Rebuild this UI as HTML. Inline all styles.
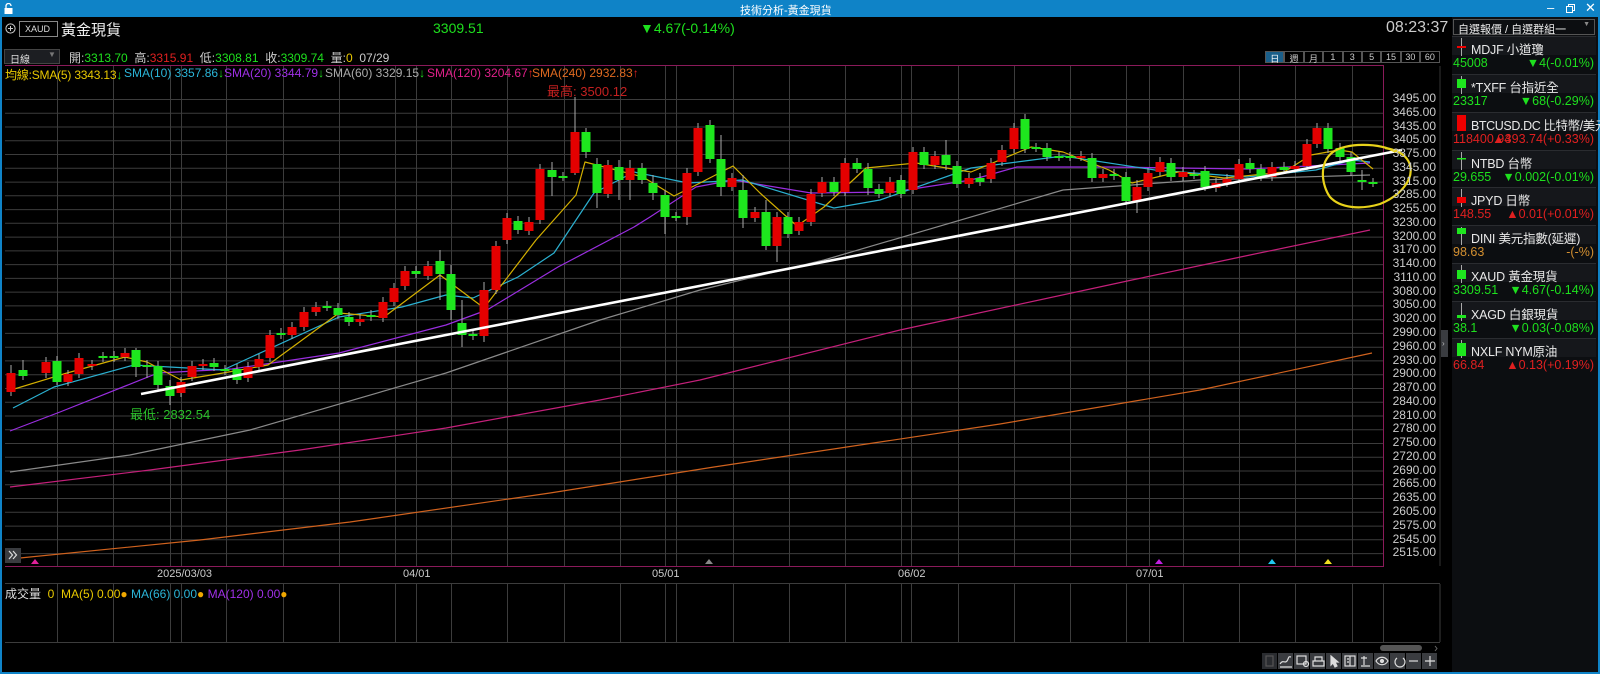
<!DOCTYPE html>
<html><head><meta charset="utf-8">
<style>
*{margin:0;padding:0;box-sizing:border-box}
body{width:1600px;height:674px;background:#000;overflow:hidden;position:relative;font-family:"Liberation Sans","Noto Sans CJK TC",sans-serif;color:#ddd}
.a{position:absolute;white-space:nowrap}
.g{color:#1ee01e}.r{color:#e02020}
.rp{position:absolute;left:1452px;top:17px;width:146px;height:655px;background:#0c0e11}
.it{position:absolute;left:0;width:144px;height:38px}
.it .n{position:absolute;left:0;top:0;width:144px;height:19px;background:#15171b;border-top:1px solid #2a2c30}
.it .n span{position:absolute;left:19px;top:2px;font-size:12.5px;color:#e8e8e8;white-space:nowrap;letter-spacing:-0.2px}
.it .v{position:absolute;left:1px;top:20px;font-size:12.5px;white-space:nowrap}
.it .c{position:absolute;right:2px;top:20px;font-size:12.5px;white-space:nowrap}
.tb{position:absolute;top:653px;width:15px;height:16px;background:#3a3c40}
</style></head><body>
<!-- title bar -->
<div class="a" style="left:0;top:0;width:1600px;height:17px;background:#0f83c7"></div>
<svg class="a" style="left:4px;top:3px" width="9" height="11"><rect x="0.5" y="5" width="8" height="6" fill="#fff"/><path d="M2 5V3a2.5 2.5 0 0 1 5 0" stroke="#fff" stroke-width="1.3" fill="none"/></svg>
<div class="a" style="left:740px;top:2px;font-size:11px;color:#fff">技術分析-黃金現貨</div>
<div class="a" style="left:1547px;top:0;font-size:13px;color:#fff">–</div>
<svg class="a" style="left:1566px;top:4px" width="10" height="9"><rect x="0.5" y="2.5" width="6" height="6" fill="none" stroke="#fff"/><path d="M2.5 2.5V0.5h6v6h-2" fill="none" stroke="#fff"/></svg>
<div class="a" style="left:1585px;top:0;font-size:13px;color:#fff">✕</div>
<!-- borders -->
<div class="a" style="left:0;top:17px;width:2px;height:657px;background:#0f83c7"></div>
<div class="a" style="left:1598px;top:17px;width:2px;height:657px;background:#0f83c7"></div>
<div class="a" style="left:0;top:672px;width:1600px;height:2px;background:#0f83c7"></div>
<!-- row1 -->
<svg class="a" style="left:5px;top:23px" width="11" height="11"><circle cx="5.5" cy="5.5" r="4.6" stroke="#ccc" fill="none"/><path d="M3 5.5h5M5.5 3v5" stroke="#ccc"/></svg>
<div class="a" style="left:19px;top:21px;width:39px;height:16px;border:1px solid #888;font-size:9px;color:#ddd;padding:2px 0 0 5px">XAUD</div>
<div class="a" style="left:61px;top:19px;font-size:15px;color:#f0f0f0">黃金現貨</div>
<div class="a g" style="left:433px;top:20px;font-size:14px">3309.51</div>
<div class="a g" style="left:640px;top:20px;font-size:14px">▼4.67(-0.14%)</div>
<div class="a" style="left:1386px;top:19px;font-size:16px;color:#ccc">08:23:37</div>
<!-- row2 -->
<div class="a" style="left:4px;top:49px;width:56px;height:15px;background:#1c1e22;border:1px solid #444;font-size:10px;color:#ddd;padding:1px 0 0 5px">日線<span style="position:absolute;left:43px;top:0;color:#777;font-size:8px">▼</span></div>
<div class="a" style="left:69px;top:49px;font-size:12px;color:#ccc">開:<span class="g">3313.70</span>&nbsp; 高:<span class="r">3315.91</span>&nbsp; 低:<span class="g">3308.81</span>&nbsp; 收:<span class="g">3309.74</span>&nbsp; 量:<span style="color:#e8c800">0</span>&nbsp; 07/29</div>
<div class="a" style="left:1265px;top:51px;height:12px;display:flex;font-size:9px;color:#ccc">
<div style="width:19.4px;border:1px solid #555;background:#1a5f8a;text-align:center;color:#fff">日</div><div style="width:19.4px;border:1px solid #555;text-align:center">週</div><div style="width:19.4px;border:1px solid #555;text-align:center">月</div><div style="width:19.4px;border:1px solid #555;text-align:center">1</div><div style="width:19.4px;border:1px solid #555;text-align:center">3</div><div style="width:19.4px;border:1px solid #555;text-align:center">5</div><div style="width:19.4px;border:1px solid #555;text-align:center">15</div><div style="width:19.4px;border:1px solid #555;text-align:center">30</div><div style="width:19.4px;border:1px solid #555;text-align:center">60</div></div>

<svg class="a" style="left:0;top:0" width="1452" height="674">
<g stroke="#3c3c3c" stroke-width="1">
<path d="M5 99.5H1383M5 113.3H1383M5 127H1383M5 140.8H1383M5 154.5H1383M5 168.3H1383M5 182.1H1383M5 195.8H1383M5 209.6H1383M5 223.3H1383M5 237.1H1383M5 250.9H1383M5 264.6H1383M5 278.4H1383M5 292.1H1383M5 305.9H1383M5 319.7H1383M5 333.4H1383M5 347.2H1383M5 360.9H1383M5 374.7H1383M5 388.5H1383M5 402.2H1383M5 416H1383M5 429.7H1383M5 443.5H1383M5 457.3H1383M5 471H1383M5 484.8H1383M5 498.5H1383M5 512.3H1383M5 526.1H1383M5 539.8H1383M5 553.6H1383"/>
<path d="M57.5 66V566M113.5 66V566M170.5 66V566M181.5 66V566M226.5 66V566M283.5 66V566M339.5 66V566M395.5 66V566M416.5 66V566M451.5 66V566M507.5 66V566M564.5 66V566M620.5 66V566M665.5 66V566M676.5 66V566M733.5 66V566M789.5 66V566M845.5 66V566M901.5 66V566M911.5 66V566M958.5 66V566M1014.5 66V566M1070.5 66V566M1126.5 66V566M1149.5 66V566M1183.5 66V566M1239.5 66V566M1295.5 66V566M1352.5 66V566"/>
<path d="M57.5 584V642M113.5 584V642M170.5 584V642M181.5 584V642M226.5 584V642M283.5 584V642M339.5 584V642M395.5 584V642M416.5 584V642M451.5 584V642M507.5 584V642M564.5 584V642M620.5 584V642M665.5 584V642M676.5 584V642M733.5 584V642M789.5 584V642M845.5 584V642M901.5 584V642M911.5 584V642M958.5 584V642M1014.5 584V642M1070.5 584V642M1126.5 584V642M1149.5 584V642M1183.5 584V642M1239.5 584V642M1295.5 584V642M1352.5 584V642M1383.5 584V642M5 583.5H1440M5 642.5H1440M1440 584V642"/>
</g>
<path d="M5 65.5H1383.5V566.5H5" stroke="#8a1a5a" fill="none"/>
<path d="M1440 66V566" stroke="#333"/>
<!-- MAs -->
<g fill="none" stroke-width="1.2" stroke-linejoin="round">
<polyline stroke="#d0621e" points="10,559 200,540 350,522 550,493 714,467 1000,424 1200,390 1372,353"/>
<polyline stroke="#c4207a" points="10,487 150,470 300,450 446,428 600,400 700,380 900,330 1132,280 1250,255 1370,230"/>
<polyline stroke="#8a8a8a" points="10,472 130,455 250,430 446,373 600,320 700,290 824,260 1063,190 1200,180 1370,175"/>
<polyline stroke="#9a2ee0" points="10,431 60,412 158,373 232,369 339,353 446,325 487,310 558,267 634,227 650,217 696,187 733,180 811,193 893,192 971,180 1017,167 1109,167 1247,169 1370,163"/>
<polyline stroke="#2bb0d0" points="13,408 54,387 134,365 223,370 339,317 402,307 446,295 473,298 518,277 554,253 594,193 634,172 688,183 742,180 834,208 880,200 971,168 1063,156 1155,170 1247,177 1316,170 1352,160 1370,162"/>
<polyline stroke="#d4b000" points="11,390 67,373 125,357 147,362 181,380 223,373 268,365 339,313 384,317 440,275 484,308 536,240 576,195 585,162 643,177 674,196 700,183 733,166 760,193 797,226 824,207 866,168 916,163 971,172 1031,147 1063,152 1109,170 1132,183 1178,172 1224,178 1284,172 1311,155 1339,150 1352,152 1373,169"/>
</g>
<!-- wicks -->
<g stroke="#aaa" stroke-width="1">
<path d="M11 365V396M23 360V380M46 357V378M57 356V385M68 370V386M79 353V378M92 360V370M103 352V362M114 351V362M125 348V361M136 348V377M147 360V378M158 361V390M170 380V405M181 377V397M192 361V381M203 359V370M214 358V371M225 365V375M237 364V384M248 362V382M259 354V371M270 330V362M281 328V339M292 322V339M304 307V331M316 302V316M327 301V311M338 303V319M349 312V326M360 314V326M371 310V321M383 297V322M394 283V306M405 266V290M416 266V278M428 261V280M440 250V300M451 265V320M462 300V347M473 329V340M484 282V342M496 241V294M507 213V244M518 216V234M529 217V235M540 164V224M552 162V196M563 172V181M575 97V175M586 128V158M597 158V208M608 160V198M619 160V200M630 160V200M642 163V184M653 175V200M665 190V234M676 212V221M687 168V225M698 123V176M710 120V163M721 135V196M732 173V191M743 175V228M755 207V222M766 200V250M777 212V262M788 212V238M799 217V235M811 189V226M822 177V197M834 177V196M845 158V196M857 158V173M868 163V195M879 184V198M890 177V197M901 175V198M913 147V194M924 147V169M935 151V169M946 140V170M957 161V188M969 173V188M980 173V186M991 158V183M1002 145V166M1014 123V153M1025 114V153M1036 143V152M1047 143V161M1059 152V161M1070 152V161M1081 151V161M1092 153V182M1103 169V182M1114 169V180M1126 172V205M1137 180V213M1148 168V191M1160 157V176M1171 158V181M1183 167V181M1194 170V179M1205 166V191M1216 178V192M1227 174V187M1239 159V183M1250 158V173M1261 164V181M1272 162V181M1284 162V174M1295 161V173M1307 139V170M1317 123V148M1328 123V153M1340 143V161M1351 152V176M1362 170V190M1373 178V187"/>
</g>
<g fill="#e40000">
<rect x="6.5" y="373" width="9" height="19"/><rect x="41.5" y="362" width="9" height="11"/><rect x="63.5" y="374" width="9" height="8"/><rect x="74.5" y="358" width="9" height="16"/><rect x="87.5" y="364" width="9" height="2"/><rect x="120.5" y="353" width="9" height="4"/><rect x="176.5" y="382" width="9" height="11"/><rect x="187.5" y="366" width="9" height="11"/><rect x="198.5" y="364" width="9" height="2"/><rect x="243.5" y="367" width="9" height="11"/><rect x="254.5" y="359" width="9" height="8"/><rect x="265.5" y="335" width="9" height="23"/><rect x="287.5" y="327" width="9" height="8"/><rect x="299.5" y="312" width="9" height="15"/><rect x="311.5" y="307" width="9" height="5"/><rect x="355.5" y="319" width="9" height="3"/><rect x="378.5" y="302" width="9" height="16"/><rect x="389.5" y="288" width="9" height="14"/><rect x="400.5" y="271" width="9" height="15"/><rect x="423.5" y="266" width="9" height="10"/><rect x="479.5" y="290" width="9" height="46"/><rect x="491.5" y="246" width="9" height="44"/><rect x="502.5" y="218" width="9" height="22"/><rect x="524.5" y="222" width="9" height="9"/><rect x="535.5" y="169" width="9" height="51"/><rect x="570.5" y="132" width="9" height="41"/><rect x="603.5" y="165" width="9" height="29"/><rect x="625.5" y="168" width="9" height="12"/><rect x="682.5" y="173" width="9" height="44"/><rect x="693.5" y="128" width="9" height="44"/><rect x="727.5" y="178" width="9" height="9"/><rect x="750.5" y="212" width="9" height="6"/><rect x="772.5" y="217" width="9" height="29"/><rect x="794.5" y="222" width="9" height="9"/><rect x="806.5" y="194" width="9" height="28"/><rect x="817.5" y="182" width="9" height="11"/><rect x="840.5" y="163" width="9" height="29"/><rect x="885.5" y="182" width="9" height="11"/><rect x="908.5" y="152" width="9" height="38"/><rect x="930.5" y="156" width="9" height="9"/><rect x="964.5" y="178" width="9" height="6"/><rect x="986.5" y="163" width="9" height="16"/><rect x="997.5" y="150" width="9" height="12"/><rect x="1009.5" y="128" width="9" height="21"/><rect x="1076.5" y="156" width="9" height="2"/><rect x="1098.5" y="174" width="9" height="4"/><rect x="1132.5" y="187" width="9" height="14"/><rect x="1143.5" y="173" width="9" height="14"/><rect x="1155.5" y="162" width="9" height="10"/><rect x="1178.5" y="172" width="9" height="5"/><rect x="1211.5" y="183" width="9" height="5"/><rect x="1222.5" y="179" width="9" height="4"/><rect x="1234.5" y="164" width="9" height="15"/><rect x="1267.5" y="167" width="9" height="10"/><rect x="1290.5" y="166" width="9" height="3"/><rect x="1302.5" y="144" width="9" height="22"/><rect x="1312.5" y="128" width="9" height="16"/>
</g>
<g fill="#1ee61e">
<rect x="18.5" y="370" width="9" height="6"/><rect x="52.5" y="361" width="9" height="21"/><rect x="98.5" y="356" width="9" height="2"/><rect x="109.5" y="356" width="9" height="2"/><rect x="131.5" y="350" width="9" height="17"/><rect x="142.5" y="365" width="9" height="2"/><rect x="153.5" y="366" width="9" height="19"/><rect x="165.5" y="386" width="9" height="10"/><rect x="209.5" y="363" width="9" height="4"/><rect x="220.5" y="369" width="9" height="2"/><rect x="232.5" y="369" width="9" height="11"/><rect x="276.5" y="333" width="9" height="2"/><rect x="322.5" y="306" width="9" height="2"/><rect x="333.5" y="308" width="9" height="7"/><rect x="344.5" y="317" width="9" height="5"/><rect x="366.5" y="315" width="9" height="2"/><rect x="411.5" y="271" width="9" height="3"/><rect x="435.5" y="261" width="9" height="13"/><rect x="446.5" y="274" width="9" height="36"/><rect x="457.5" y="323" width="9" height="12"/><rect x="468.5" y="334" width="9" height="2"/><rect x="513.5" y="221" width="9" height="9"/><rect x="547.5" y="170" width="9" height="7"/><rect x="558.5" y="176" width="9" height="2"/><rect x="581.5" y="132" width="9" height="20"/><rect x="592.5" y="164" width="9" height="29"/><rect x="614.5" y="167" width="9" height="13"/><rect x="637.5" y="168" width="9" height="12"/><rect x="648.5" y="183" width="9" height="10"/><rect x="660.5" y="195" width="9" height="22"/><rect x="671.5" y="216" width="9" height="2"/><rect x="705.5" y="125" width="9" height="34"/><rect x="716.5" y="159" width="9" height="28"/><rect x="738.5" y="190" width="9" height="28"/><rect x="761.5" y="212" width="9" height="34"/><rect x="783.5" y="217" width="9" height="17"/><rect x="829.5" y="182" width="9" height="10"/><rect x="852.5" y="163" width="9" height="6"/><rect x="863.5" y="169" width="9" height="19"/><rect x="874.5" y="189" width="9" height="5"/><rect x="896.5" y="180" width="9" height="14"/><rect x="919.5" y="152" width="9" height="13"/><rect x="941.5" y="155" width="9" height="10"/><rect x="952.5" y="166" width="9" height="18"/><rect x="975.5" y="178" width="9" height="4"/><rect x="1020.5" y="119" width="9" height="30"/><rect x="1031.5" y="147" width="9" height="2"/><rect x="1042.5" y="148" width="9" height="9"/><rect x="1054.5" y="156" width="9" height="2"/><rect x="1065.5" y="156" width="9" height="2"/><rect x="1087.5" y="158" width="9" height="20"/><rect x="1109.5" y="174" width="9" height="2"/><rect x="1121.5" y="177" width="9" height="24"/><rect x="1166.5" y="163" width="9" height="14"/><rect x="1189.5" y="174" width="9" height="2"/><rect x="1200.5" y="171" width="9" height="16"/><rect x="1245.5" y="163" width="9" height="6"/><rect x="1256.5" y="169" width="9" height="8"/><rect x="1279.5" y="167" width="9" height="3"/><rect x="1323.5" y="128" width="9" height="21"/><rect x="1335.5" y="148" width="9" height="9"/><rect x="1346.5" y="157" width="9" height="15"/><rect x="1357.5" y="180" width="9" height="2"/><rect x="1368.5" y="182" width="9" height="2"/>
</g>
<!-- trendline -->
<line x1="141" y1="394" x2="1402" y2="150" stroke="#fff" stroke-width="2.6"/>
<!-- hand circle -->
<path d="M1396 152C1378 142 1345 143 1333 152C1318 163 1322 186 1330 197C1340 208 1360 210 1380 204C1400 196 1414 180 1410 165C1407 155 1398 150 1385 148" fill="none" stroke="#e8d21a" stroke-width="2.2"/>
<!-- markers -->
<path d="M31 564l4-5 4 5z" fill="#e0209a"/><path d="M705 564l4-5 4 5z" fill="#888"/><path d="M1155 564l4-5 4 5z" fill="#c020e0"/><path d="M1268 564l4-5 4 5z" fill="#20c8f0"/><path d="M1324 564l4-5 4 5z" fill="#f0e020"/>
<rect x="5" y="548" width="16" height="15" fill="#3a3c40"/>
<path d="M9 551l3.5 4-3.5 4M13 551l3.5 4-3.5 4" stroke="#ddd" fill="none" stroke-width="1.2"/>
<!-- scrollbar -->
<rect x="1380" y="645" width="42" height="6" rx="3" fill="#555"/>
<path d="M1435 646l2 2.5-2 2.5" stroke="#666" fill="none"/>
</svg>

<!-- SMA legend -->
<div class="a" style="left:5px;top:66px;font-size:12px;letter-spacing:-0.2px"><span style="color:#e8c800">均線:SMA(5) 3343.13</span><span class="g">↓</span></div>
<div class="a" style="left:124px;top:66px;font-size:12px"><span style="color:#2bb5d8">SMA(10) 3357.86</span><span class="g">↓</span></div>
<div class="a" style="left:224px;top:66px;font-size:12px"><span style="color:#a030e8">SMA(20) 3344.79</span><span class="g">↓</span></div>
<div class="a" style="left:325px;top:66px;font-size:12px"><span style="color:#aaa">SMA(60) 3329.15</span><span class="g">↓</span></div>
<div class="a" style="left:427px;top:66px;font-size:12px"><span style="color:#e0208a">SMA(120) 3204.67</span><span class="r">↑</span></div>
<div class="a" style="left:532px;top:66px;font-size:12px"><span style="color:#e06a20">SMA(240) 2932.83</span><span class="r">↑</span></div>
<div class="a" style="left:547px;top:81px;font-size:13px;color:#c42020">最高: 3500.12</div>
<div class="a" style="left:130px;top:404px;font-size:13px;color:#2ac02a">最低: 2832.54</div>
<!-- price axis -->
<div class="a" style="left:1384px;top:92px;width:52px;text-align:right;font-size:12px;line-height:13.76px;color:#ccc;white-space:normal">3495.00 3465.00 3435.00 3405.00 3375.00 3345.00 3315.00 3285.00 3255.00 3230.00 3200.00 3170.00 3140.00 3110.00 3080.00 3050.00 3020.00 2990.00 2960.00 2930.00 2900.00 2870.00 2840.00 2810.00 2780.00 2750.00 2720.00 2690.00 2665.00 2635.00 2605.00 2575.00 2545.00 2515.00</div>
<!-- dates -->
<div class="a" style="left:157px;top:568px;font-size:11px;color:#ccc">2025/03/03</div>
<div class="a" style="left:403px;top:568px;font-size:11px;color:#ccc">04/01</div>
<div class="a" style="left:652px;top:568px;font-size:11px;color:#ccc">05/01</div>
<div class="a" style="left:898px;top:568px;font-size:11px;color:#ccc">06/02</div>
<div class="a" style="left:1136px;top:568px;font-size:11px;color:#ccc">07/01</div>
<!-- volume legend -->
<div class="a" style="left:5px;top:585px;font-size:12px;color:#ddd">成交量 <span style="color:#e8c800">&nbsp;0&nbsp; MA(5) 0.00</span><span style="color:#f0a800">●</span> <span style="color:#2bb5d8">MA(66) 0.00</span><span style="color:#f0a800">●</span> <span style="color:#a030e8">MA(120) 0.00</span><span style="color:#f0a800">●</span></div>
<!-- toolbar -->
<div class="tb" style="left:1262px;background:#2a2c30"></div><div class="tb" style="left:1278px"></div><div class="tb" style="left:1294px"></div><div class="tb" style="left:1310px"></div><div class="tb" style="left:1326px"></div><div class="tb" style="left:1342px"></div><div class="tb" style="left:1358px"></div><div class="tb" style="left:1374px"></div><div class="tb" style="left:1390px"></div><div class="tb" style="left:1406px"></div><div class="tb" style="left:1422px"></div>
<svg class="a" style="left:1262px;top:653px" width="178" height="16" fill="none" stroke="#ddd" stroke-width="1.2">
<rect x="4" y="3" width="7" height="10" stroke="#555"/>
<path d="M18 11c3-5 5 0 7-3s1-5 4-4M18 14h12"/>
<rect x="35" y="3" width="9" height="8"/><circle cx="44" cy="11" r="2.5"/>
<path d="M51 8h11v5h-11zM53 8V4h7v4"/>
<path d="M69 3l7 6h-3l2 4-2 1-2-4-2 2z" fill="#ddd"/>
<rect x="83" y="3" width="10" height="10"/><path d="M88 3v10M85 6h2M85 9h2"/>
<path d="M102 3v9M99 5h6M99 13h9"/>
<path d="M114 8c3-5 9-5 12 0c-3 5-9 5-12 0z"/><circle cx="120" cy="8" r="1.5" fill="#ddd"/>
<path d="M141 5a5 5 0 1 1-6 0"/>
<path d="M147 8h9"/><path d="M163 8h10M168 3v10"/>
</svg>

<!-- right panel -->
<div class="rp">
<div class="a" style="left:1px;top:2px;width:142px;height:16px;border:1px solid #555;font-size:11px;color:#eee;padding:1px 0 0 4px">自選報價 / 自選群組一<span style="position:absolute;right:4px;top:1px;color:#888;font-size:7px">▼</span></div>
<div class="a" style="left:0;top:20px;width:144px;height:1px;background:#2a2c30"></div>
</div>
<div class="rp" style="background:none">
<div class="it" style="top:19px"><div class="n"><svg class="a" style="left:5px;top:1px" width="9" height="18"><path d="M4.5 0v18" stroke="#aaa"/><rect x="0" y="8" width="9" height="2" fill="#e00"/></svg><span>MDJF 小道瓊</span></div><div class="v g">45008</div><div class="c g">▼4(-0.01%)</div></div>
<div class="it" style="top:57px"><div class="n"><svg class="a" style="left:5px;top:1px" width="9" height="18"><path d="M4.5 0v18" stroke="#aaa"/><rect x="0" y="3" width="9" height="9" fill="#1ee61e"/></svg><span>*TXFF 台指近全</span></div><div class="v g">23317</div><div class="c g">▼68(-0.29%)</div></div>
<div class="it" style="top:95px"><div class="n"><svg class="a" style="left:5px;top:1px" width="9" height="18"><rect x="0" y="1" width="9" height="16" fill="#e00"/></svg><span style="letter-spacing:-0.4px">BTCUSD.DC 比特幣/美元</span></div><div class="v r">118400.94</div><div class="c r">▲393.74(+0.33%)</div></div>
<div class="it" style="top:133px"><div class="n"><svg class="a" style="left:5px;top:1px" width="9" height="18"><path d="M4.5 0v18" stroke="#aaa"/><rect x="0" y="6" width="9" height="1.5" fill="#1ee61e"/></svg><span>NTBD 台幣</span></div><div class="v g">29.655</div><div class="c g">▼0.002(-0.01%)</div></div>
<div class="it" style="top:170px"><div class="n"><svg class="a" style="left:5px;top:1px" width="9" height="18"><path d="M4.5 0v18" stroke="#aaa"/><rect x="0" y="8" width="9" height="6" fill="#e00"/></svg><span>JPYD 日幣</span></div><div class="v r">148.55</div><div class="c r">▲0.01(+0.01%)</div></div>
<div class="it" style="top:208px"><div class="n"><svg class="a" style="left:5px;top:1px" width="9" height="18"><path d="M4.5 0v18" stroke="#aaa"/><rect x="0" y="1" width="9" height="6" fill="#1ee61e"/></svg><span>DINI 美元指數(延遲)</span></div><div class="v" style="color:#d49030">98.63</div><div class="c" style="color:#d49030">-(-%)</div></div>
<div class="it" style="top:246px"><div class="n"><svg class="a" style="left:5px;top:1px" width="9" height="18"><path d="M4.5 0v18" stroke="#aaa"/><rect x="0" y="5" width="9" height="9" fill="#1ee61e"/></svg><span>XAUD 黃金現貨</span></div><div class="v g">3309.51</div><div class="c g">▼4.67(-0.14%)</div></div>
<div class="it" style="top:284px"><div class="n"><svg class="a" style="left:5px;top:1px" width="9" height="18"><path d="M4.5 0v18" stroke="#aaa"/><rect x="0" y="12" width="9" height="3" fill="#1ee61e"/></svg><span>XAGD 白銀現貨</span></div><div class="v g">38.1</div><div class="c g">▼0.03(-0.08%)</div></div>
<div class="it" style="top:321px"><div class="n"><svg class="a" style="left:5px;top:1px" width="9" height="18"><path d="M4.5 0v18" stroke="#aaa"/><rect x="0" y="3" width="9" height="13" fill="#1ee61e"/></svg><span>NXLF NYM原油</span></div><div class="v r">66.84</div><div class="c r">▲0.13(+0.19%)</div></div>
</div>
<div class="a" style="left:1441px;top:330px;width:7px;height:27px;background:#3a3c40;font-size:8px;color:#bbb;padding:9px 0 0 1px">›</div>
</body></html>
